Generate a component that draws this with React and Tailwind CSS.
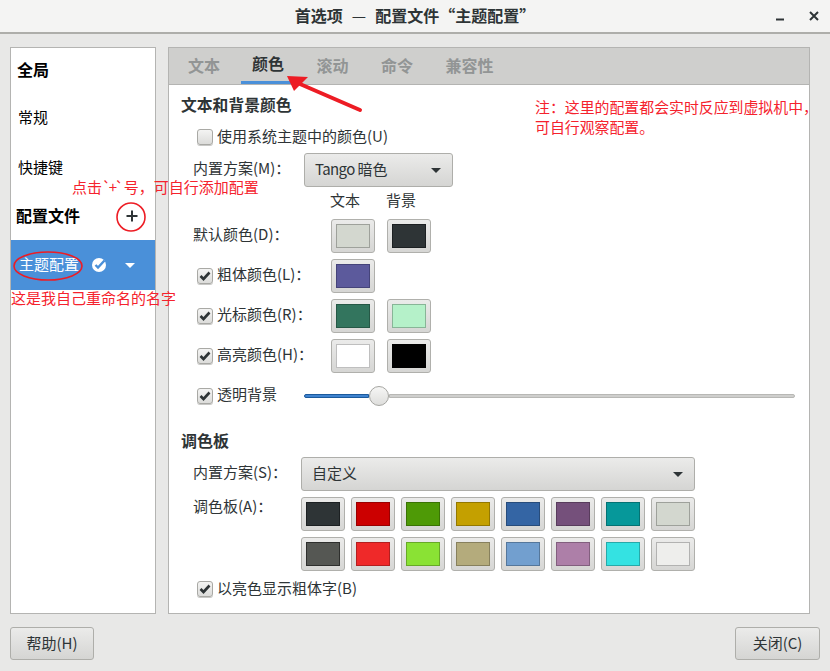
const Caret = ({ className = "" }) => (
  <svg width="10" height="5" viewBox="0 0 10 5" className={className}>
    <path d="M0 0h10L5 5z" fill="currentColor" />
  </svg>
);

const Check = ({ checked = true }) => (
  <span className="flex h-[16px] w-[16px] shrink-0 items-center justify-center rounded-[3px] border border-[#a9a9a5] bg-gradient-to-b from-[#f4f4f3] to-[#dcdcda] shadow-[0_1px_0_#c8c8c6]">
    {checked && (
      <svg width="12" height="10" viewBox="0 0 12 10">
        <path d="M1.5 5l3 3 6-6.5" fill="none" stroke="#2e3436" strokeWidth="2.6" />
      </svg>
    )}
  </span>
);

const Swatch = ({ color }) => (
  <div className="flex h-[34px] w-[44px] items-center justify-center rounded-[3px] border border-[#b0b0ac] bg-gradient-to-b from-[#ebebea] to-[#d6d6d4]">
    <div className={`h-[24px] w-[34px] border ${color}`} />
  </div>
);

const Combo = ({ children, className = "" }) => (
  <div
    className={`flex h-[34px] items-center justify-between rounded-[3px] border border-[#aeaeaa] bg-gradient-to-b from-[#ebebea] to-[#d5d5d3] pl-[10px] pr-[11px] text-[#2e3436] ${className}`}
  >
    <span className="mb-[2px]">{children}</span>
    <Caret className="text-[#2e3436]" />
  </div>
);

const palette1 = [
  "bg-[#2e3436] border-[#1c2022]",
  "bg-[#cc0000] border-[#990000]",
  "bg-[#4e9a06] border-[#3a7304]",
  "bg-[#c4a000] border-[#937800]",
  "bg-[#3465a4] border-[#274c7b]",
  "bg-[#75507b] border-[#583c5c]",
  "bg-[#06989a] border-[#047273]",
  "bg-[#d3d7cf] border-[#9ea19b]",
];

const palette2 = [
  "bg-[#555753] border-[#2e2f2d]",
  "bg-[#ef2929] border-[#b31f1f]",
  "bg-[#8ae234] border-[#67a927]",
  "bg-[#b4ab7c] border-[#87805d]",
  "bg-[#729fcf] border-[#55779b]",
  "bg-[#ad7fa8] border-[#825f7e]",
  "bg-[#34e2e2] border-[#27a9a9]",
  "bg-[#eeeeec] border-[#b2b2b1]",
];

const colorRows = [
  { label: "粗体颜色(L)：", colors: ["bg-[#5c5a9c] border-[#45447a]"] },
  { label: "光标颜色(R)：", colors: ["bg-[#33755e] border-[#265846]", "bg-[#b5f1c9] border-[#88b597]"] },
  { label: "高亮颜色(H)：", colors: ["bg-white border-[#bfbfbf]", "bg-black border-black"] },
];

const tabs = [
  { label: "文本", w: "w-[54px]" },
  { label: "颜色", w: "w-[54px]", active: true },
  { label: "滚动", w: "w-[55px]" },
  { label: "命令", w: "w-[54px]" },
  { label: "兼容性", w: "w-[71px]" },
];

const Sidebar = () => (
  <div className="flex h-[567px] w-[146px] shrink-0 flex-col border border-[#b4b4b2] bg-white text-black">
    <div className="mt-[10px] flex h-[24px] items-center pl-[6px] text-[16px] font-bold">
      <span className="mb-[3px]">全局</span>
    </div>
    <div className="mt-[24px] flex h-[24px] items-center pl-[7px]">
      <span className="mb-[2px]">常规</span>
    </div>
    <div className="mt-[26px] flex h-[24px] items-center pl-[7px]">
      <span className="mb-[2px]">快捷键</span>
    </div>
    <div className="mt-[24px] flex h-[24px] items-center justify-between pl-[5px] pr-[17px]">
      <span className="mb-[2px] text-[16px] font-bold">配置文件</span>
      <svg width="12" height="12" viewBox="0 0 12 12">
        <path d="M6 0.5v11M0.5 6h11" stroke="#2e3436" strokeWidth="2" />
      </svg>
    </div>
    <div className="mt-[12px] flex h-[50px] items-center bg-[#4a90d9] pl-[8px] text-white">
      <span className="mb-[2px] w-[72px]">主题配置</span>
      <svg width="16" height="16" viewBox="0 0 16 16">
        <circle cx="8" cy="8" r="7" fill="white" />
        <path d="M4.5 8l2.5 2.5 6.5-7" fill="none" stroke="#4a90d9" strokeWidth="2.4" />
      </svg>
      <Caret className="ml-[18px] text-white" />
    </div>
  </div>
);

const ColorsPage = () => (
  <div className="flex flex-col pl-[12px] text-[#2e3436]">
    <div className="mt-[10px] h-[20px] text-[15.8px] font-bold leading-[20px]">文本和背景颜色</div>
    <label className="mt-[12px] flex h-[20px] items-center gap-[4px] pl-[16px]">
      <Check checked={false} />
      <span className="mb-[2px]">使用系统主题中的颜色(U)</span>
    </label>
    <div className="mt-[6px] flex h-[34px] items-center pl-[12px]">
      <span className="mb-[3px] w-[111px]">内置方案(M)：</span>
      <Combo className="w-[149px]">
        <span className="tracking-[-0.6px]">Tango </span>暗色
      </Combo>
    </div>
    <div className="mt-[5px] flex h-[20px] items-center pl-[149px]">
      <span className="mb-[3px] w-[56px]">文本</span>
      <span className="mb-[3px]">背景</span>
    </div>
    <div className="mt-[7px] flex h-[34px] items-center pl-[12px]">
      <span className="mb-[4px] w-[138px]">默认颜色(D)：</span>
      <div className="flex gap-[12px]">
        <Swatch color="bg-[#d3d7cf] border-[#9ea19b]" />
        <Swatch color="bg-[#2e3436] border-[#1c2022]" />
      </div>
    </div>
    {colorRows.map((row) => (
      <div key={row.label} className="mt-[6px] flex h-[34px] items-center pl-[16px]">
        <span className="flex w-[134px] items-center gap-[4px]">
          <Check />
          <span className="mb-[3px]">{row.label}</span>
        </span>
        <div className="flex gap-[12px]">
          {row.colors.map((c) => (
            <Swatch key={c} color={c} />
          ))}
        </div>
      </div>
    ))}
    <div className="mt-[13px] flex h-[20px] items-center pl-[16px]">
      <span className="flex w-[107px] items-center gap-[4px]">
        <Check />
        <span className="mb-[3px]">透明背景</span>
      </span>
      <div className="flex w-[491px] items-center">
        <div className="h-[4px] w-[65px] rounded-l-full border border-[#1c5a9c] bg-[#3f83cf]" />
        <div className="h-[20px] w-[20px] shrink-0 rounded-full border border-[#a5a5a1] bg-gradient-to-b from-[#f6f6f5] to-[#dededc]" />
        <div className="h-[4px] flex-1 rounded-r-full border border-[#b8b8b5] bg-[#cfcfcd]" />
      </div>
    </div>
    <div className="mt-[24px] h-[20px] text-[16px] font-bold leading-[20px]">调色板</div>
    <div className="mt-[7px] flex h-[34px] items-center pl-[12px]">
      <span className="mb-[3px] w-[108px]">内置方案(S)：</span>
      <Combo className="w-[394px]">自定义</Combo>
    </div>
    <div className="mt-[6px] flex pl-[12px]">
      <span className="w-[108px] leading-[18px]">调色板(A)：</span>
      <div className="flex w-[394px] flex-col gap-[6px]">
        <div className="flex justify-between">
          {palette1.map((c) => (
            <Swatch key={c} color={c} />
          ))}
        </div>
        <div className="flex justify-between">
          {palette2.map((c) => (
            <Swatch key={c} color={c} />
          ))}
        </div>
      </div>
    </div>
    <label className="mt-[8px] flex h-[20px] items-center gap-[4px] pl-[16px]">
      <Check />
      <span className="mb-[2px]">以亮色显示粗体字(B)</span>
    </label>
  </div>
);

const Annotations = () => (
  <>
    <svg className="pointer-events-none absolute left-0 top-0" width="830" height="671" viewBox="0 0 830 671">
      <ellipse cx="131" cy="217" rx="14" ry="14" fill="none" stroke="#ed1c24" strokeWidth="1.6" />
      <ellipse cx="48" cy="266" rx="34" ry="14" fill="none" stroke="#ed1c24" strokeWidth="1.6" />
      <path d="M360 110L300 84" stroke="#ed1c24" strokeWidth="4" strokeLinecap="round" />
      <path d="M287 76L308 77L294 91z" fill="#ed1c24" />
    </svg>
    <div className="absolute left-[72px] top-[177px] text-[15px] leading-[20px] text-[#f5222d]">
      点击<span className="tracking-[-2.3px]">`+`</span>
      <span className="ml-[2px]">号，可自行添加配置</span>
    </div>
    <div className="absolute left-[11px] top-[288px] text-[15px] leading-[20px] text-[#f5222d]">这是我自己重命名的名字</div>
    <div className="absolute left-[535px] top-[97px] text-[14.9px] leading-[20px] text-[#f5222d]">
      <div>注：这里的配置都会实时反应到虚拟机中，</div>
      <div>可自行观察配置。</div>
    </div>
  </>
);

export default function App() {
  return (
    <div
      className="relative flex h-[671px] w-[830px] flex-col overflow-hidden bg-[#e8e8e7] text-[15px] text-[#2e3436]"
      style={{ fontFamily: '"Noto Sans CJK SC", sans-serif' }}
    >
      <div className="relative flex h-[34px] shrink-0 items-center justify-center border-b-2 border-[#aeaeaa] bg-[#f4f4f3] pb-[2px] text-[16px] font-bold">
        <span>首选项</span>
        <span className="mx-[9px] font-normal">—</span>
        <span>配置文件“主题配置”</span>
        <div className="absolute right-[11px] top-[11px] flex items-center gap-[24px]">
          <svg width="10" height="10" viewBox="0 0 10 10">
            <path d="M1 8.5h8" stroke="#2e3436" strokeWidth="2" />
          </svg>
          <svg width="10" height="10" viewBox="0 0 10 10">
            <path d="M1 1l8 8M9 1l-8 8" stroke="#2e3436" strokeWidth="2" />
          </svg>
        </div>
      </div>
      <div className="flex flex-1 flex-col">
        <div className="mt-[13px] flex pl-[10px]">
          <Sidebar />
          <div className="ml-[12px] h-[567px] w-[642px] border border-[#b4b4b2] bg-white">
            <div className="flex h-[37px] items-stretch gap-[10px] border-b border-[#b4b4b2] bg-[#cfcfcd] pl-[8px] text-[16px] font-bold">
              {tabs.map((t) => (
                <div
                  key={t.label}
                  className={`flex items-center justify-center pb-[3px] ${t.w} ${
                    t.active ? "border-b-[3px] border-[#4a90d9] text-[#2e3436]" : "text-[#929595]"
                  }`}
                >
                  {t.label}
                </div>
              ))}
            </div>
            <ColorsPage />
          </div>
        </div>
        <div className="mt-[13px] flex justify-between pl-[10px] pr-[10px]">
          <button className="h-[33px] w-[84px] rounded-[3px] border border-[#aeaeaa] bg-gradient-to-b from-[#ebebea] to-[#d5d5d3]">帮助(H)</button>
          <button className="h-[33px] w-[85px] rounded-[3px] border border-[#aeaeaa] bg-gradient-to-b from-[#ebebea] to-[#d5d5d3]">关闭(C)</button>
        </div>
      </div>
      <Annotations />
    </div>
  );
}
